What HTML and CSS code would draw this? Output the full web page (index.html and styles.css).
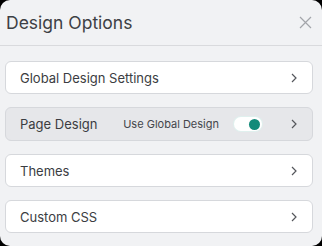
FILE: index.html
```html
<!DOCTYPE html>
<html lang="en">
<head>
  <meta charset="UTF-8" />
  <title>Design Options</title>
  <link rel="stylesheet" href="styles.css">
</head>
<body>
  <div class="panel">
    <div class="panel-header">
      <h1>Design Options</h1>
      <button class="close-btn" title="Close">
        <svg width="13" height="13" viewBox="0 0 13 13"><path d="M1 1L12 12M12 1L1 12" stroke="#a3a5aa" stroke-width="1.2" fill="none"/></svg>
      </button>
    </div>

    <div class="option-list">
      <div class="option">
        <span class="label">Global Design Settings</span>
        <span class="chevron"><svg width="6" height="10" viewBox="0 0 6 10"><path d="M1 1L5 5L1 9" stroke="#55575c" stroke-width="1.2" fill="none"/></svg></span>
      </div>

      <div class="option active">
        <span class="label">Page Design</span>
        <span class="global-note">Use Global Design</span>
        <span class="toggle"><span class="knob"></span></span>
        <span class="chevron"><svg width="6" height="10" viewBox="0 0 6 10"><path d="M1 1L5 5L1 9" stroke="#55575c" stroke-width="1.2" fill="none"/></svg></span>
      </div>

      <div class="option">
        <span class="label">Themes</span>
        <span class="chevron"><svg width="6" height="10" viewBox="0 0 6 10"><path d="M1 1L5 5L1 9" stroke="#55575c" stroke-width="1.2" fill="none"/></svg></span>
      </div>

      <div class="option">
        <span class="label">Custom CSS</span>
        <span class="chevron"><svg width="6" height="10" viewBox="0 0 6 10"><path d="M1 1L5 5L1 9" stroke="#55575c" stroke-width="1.2" fill="none"/></svg></span>
      </div>
    </div>
  </div>
</body>
</html>
```

FILE: styles.css
```css
body {
  margin: 0;
  background: #000;
  font-family: Inter, 'Noto Sans', sans-serif;
}

.panel {
  width: 322px;
  height: 246px;
  background: #f1f2f4;
  border-radius: 10px;
  overflow: hidden;
}

.panel-header {
  height: 46px;
  display: flex;
  align-items: center;
  justify-content: space-between;
  padding: 0 10px 0 6px;
  border-bottom: 1px solid #d9dadd;
  box-sizing: border-box;
}

.panel-header h1 {
  margin: 0;
  font-size: 17.5px;
  font-weight: 400;
  color: #3d3f45;
}

.close-btn {
  border: none;
  background: none;
  padding: 0;
  display: flex;
}

.option-list {
  display: flex;
  flex-direction: column;
  gap: 13px;
  padding: 15px 9px 0 5px;
}

.option {
  height: 33px;
  display: flex;
  align-items: center;
  padding: 0 15px 0 14px;
  background: #fff;
  border: 1px solid #d6d8dc;
  border-radius: 6px;
  box-sizing: border-box;
}

.option.active {
  height: 34px;
  background: #e6e7ea;
}

.label {
  font-size: 13px;
  color: #3b3d42;
  flex: 1;
}

.global-note {
  font-size: 11px;
  color: #44464b;
  margin-right: 15px;
}

.toggle {
  width: 28px;
  height: 14px;
  background: #fff;
  border-radius: 7px;
  box-shadow: 0 0 0 1px #e0f0ee;
  display: flex;
  align-items: center;
  justify-content: flex-end;
  padding-right: 2px;
  box-sizing: border-box;
  margin-right: 29px;
}

.knob {
  width: 11px;
  height: 11px;
  border-radius: 50%;
  background: #138a7a;
}

.chevron {
  display: flex;
}
```
